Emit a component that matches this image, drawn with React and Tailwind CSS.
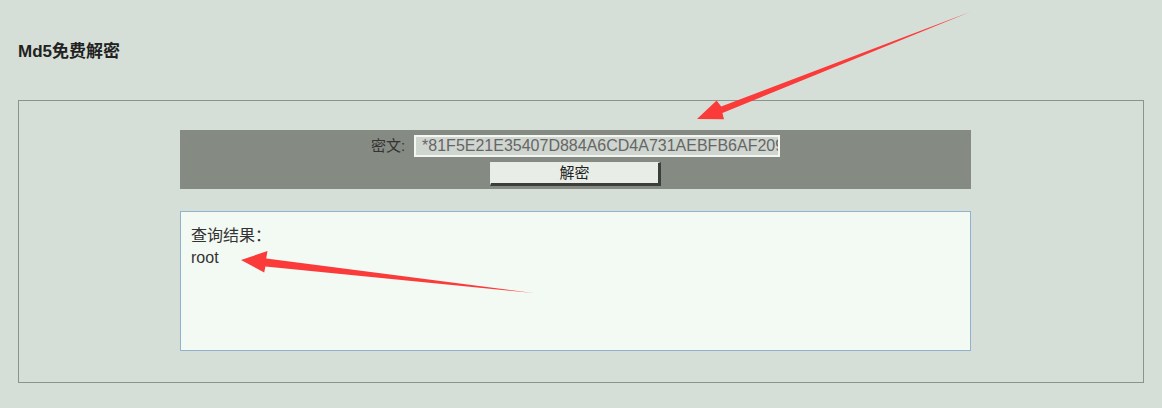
export default function App() {
  return (
    <div className="relative min-h-[408px] w-full bg-[#d6dfd7] pt-[40px] pl-[18px] pr-[18px] font-['Liberation_Sans','Noto_Sans_CJK_SC',sans-serif] text-[#333]">
      <h1 className="text-[17px] leading-[24px] font-bold text-[#222]">Md5免费解密</h1>

      <div className="mt-[36px] w-[1126px] border border-[#8c938b] pt-[29px] pb-[31px]">
        <div className="ml-[161px] flex h-[59px] w-[791px] flex-col items-center bg-[#858a82] pt-[5px]">
          <div className="flex items-center">
            <span className="mr-[9px] text-[15px] text-[#333]">密文:</span>
            <input
              readOnly
              value="*81F5E21E35407D884A6CD4A731AEBFB6AF209E1B"
              className="h-[22px] w-[366px] border-2 border-[#f4f6f3] bg-[#cfd5cf] pl-[6px] pr-0 text-[16px] text-[#666] outline-none"
            />
          </div>
          <button className="mt-[4px] h-[24px] w-[171px] border border-t-[#e6ebe5] border-l-[#e6ebe5] border-r-[3px] border-b-[3px] border-r-[#3c3e3b] border-b-[#3c3e3b] bg-[#e8ede7] text-[15px] leading-[18px] text-[#222]">
            解密
          </button>
        </div>

        <div className="mt-[22px] ml-[161px] h-[140px] w-[791px] border border-[#8fb2cf] bg-[#f3f9f3] px-[10px] pt-[13px] text-[16px] leading-[22px] text-[#333]">
          <div>查询结果：</div>
          <div>root</div>
        </div>
      </div>

      <svg className="pointer-events-none absolute left-0 top-0" width="1162" height="408">
        <polygon
          fill="#fb3a3a"
          points="970,12 721.2,106.6 716.6,100.6 697,119 724,119.2 722.4,113.0"
        />
        <polygon
          fill="#fb3a3a"
          points="533,293 266.2,258.6 267.5,251.0 241,260 264.2,272.5 265.4,266.4"
        />
      </svg>
    </div>
  );
}
